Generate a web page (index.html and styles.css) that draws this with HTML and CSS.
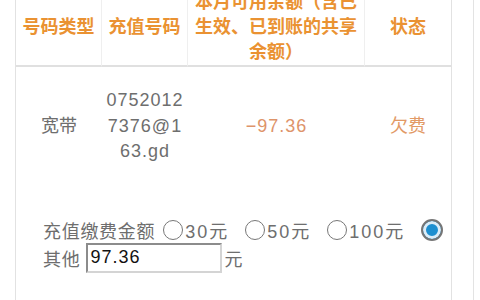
FILE: index.html
```html
<!DOCTYPE html>
<html lang="zh-CN">
<head>
<meta charset="utf-8">
<title>充值缴费</title>
<link rel="stylesheet" href="styles.css">
</head>
<body>
<div class="panel">
  <table class="bill">
    <colgroup>
      <col class="c1"><col class="c2"><col class="c3"><col class="c4">
    </colgroup>
    <thead>
      <tr>
        <th>号码类型</th>
        <th>充值号码</th>
        <th>本月可用余额（含已生效、已到账的共享余额）</th>
        <th class="last">状态</th>
      </tr>
    </thead>
    <tbody>
      <tr class="info">
        <td>宽带</td>
        <td class="num">0752012<wbr>7376@1<wbr>63.gd</td>
        <td class="bal">−97.36</td>
        <td class="status">欠费</td>
      </tr>
      <tr class="pay">
        <td colspan="4">
          <div class="line">
            <span class="label">充值缴费金额</span>
            <span class="opt"><span class="radio"></span><span class="amt">30元</span></span>
            <span class="opt"><span class="radio"></span><span class="amt">50元</span></span>
            <span class="opt"><span class="radio"></span><span class="amt">100元</span></span>
            <span class="opt"><span class="radio checked"></span></span>
          </div>
          <div class="line other">
            <span class="label">其他</span>
            <input class="money" type="text" value="97.36">
            <span class="unit">元</span>
          </div>
        </td>
      </tr>
    </tbody>
  </table>
</div>
</body>
</html>
```

FILE: styles.css
```css
html, body {
  margin: 0;
  padding: 0;
  background: #ffffff;
  overflow: hidden;
}

body {
  font-family: "Liberation Sans", "Noto Sans CJK SC", sans-serif;
  font-size: 18px;
  color: #6e6e6e;
}

.panel {
  width: 458px;
  height: 320px;
  margin-top: -10px;
  padding-left: 15px;
  border-right: 1px solid #e3e3e3;
}

.bill {
  table-layout: fixed;
  width: 437px;
  border-collapse: separate;
  border-spacing: 0;
  border-left: 1px solid #e2e2e2;
  border-right: 1px solid #e2e2e2;
}

.c1 { width: 86px; }
.c2 { width: 86px; }
.c3 { width: 177px; }
.c4 { width: 86px; }

.bill th {
  color: #ea9232;
  font-weight: 600;
  line-height: 25px;
  padding: 0 5px;
  text-align: center;
  vertical-align: middle;
  border-right: 1px solid #efefef;
  border-bottom: 2px solid #e0e0e0;
}

.bill th.last {
  border-right: none;
}

.info td {
  text-align: center;
  vertical-align: middle;
  line-height: 25.5px;
  padding: 21px 3px;
}

.num {
  letter-spacing: 1px;
  word-break: break-all;
}

.bal {
  color: #de946a;
  letter-spacing: 1px;
}

.status {
  color: #e29a66;
}

.pay td {
  padding: 31px 0 40px 27px;
  vertical-align: top;
}

.line {
  display: flex;
  align-items: center;
  height: 26px;
  white-space: nowrap;
}

.line > * {
  flex-shrink: 0;
}

.line .label {
  letter-spacing: 0.7px;
  margin-right: 8px;
}

.opt {
  display: flex;
  align-items: center;
  margin-right: 16px;
}

.opt:last-child {
  margin-right: 0;
}

.radio {
  box-sizing: border-box;
  width: 20px;
  height: 20px;
  border: 1.5px solid #777777;
  border-radius: 50%;
  background: #ffffff;
  margin-right: 2px;
}

.radio.checked {
  width: 22px;
  height: 22px;
  border: 2px solid #767676;
  background: #1d8fd0;
  box-shadow: inset 0 0 0 3px #dcedf8;
}

.amt {
  letter-spacing: 2px;
}

.line.other {
  height: 30px;
}

.line.other .label {
  margin-right: 6px;
}

.money {
  box-sizing: border-box;
  width: 136px;
  height: 30px;
  margin: 0 2px 0 0;
  padding: 0 2px;
  border: 2px solid;
  border-color: #8c8c8c #d4d4d4 #d4d4d4 #8c8c8c;
  font-family: "Liberation Sans", "Noto Sans CJK SC", sans-serif;
  font-size: 18px;
  letter-spacing: 1px;
  color: #111111;
  background: #ffffff;
}
```
